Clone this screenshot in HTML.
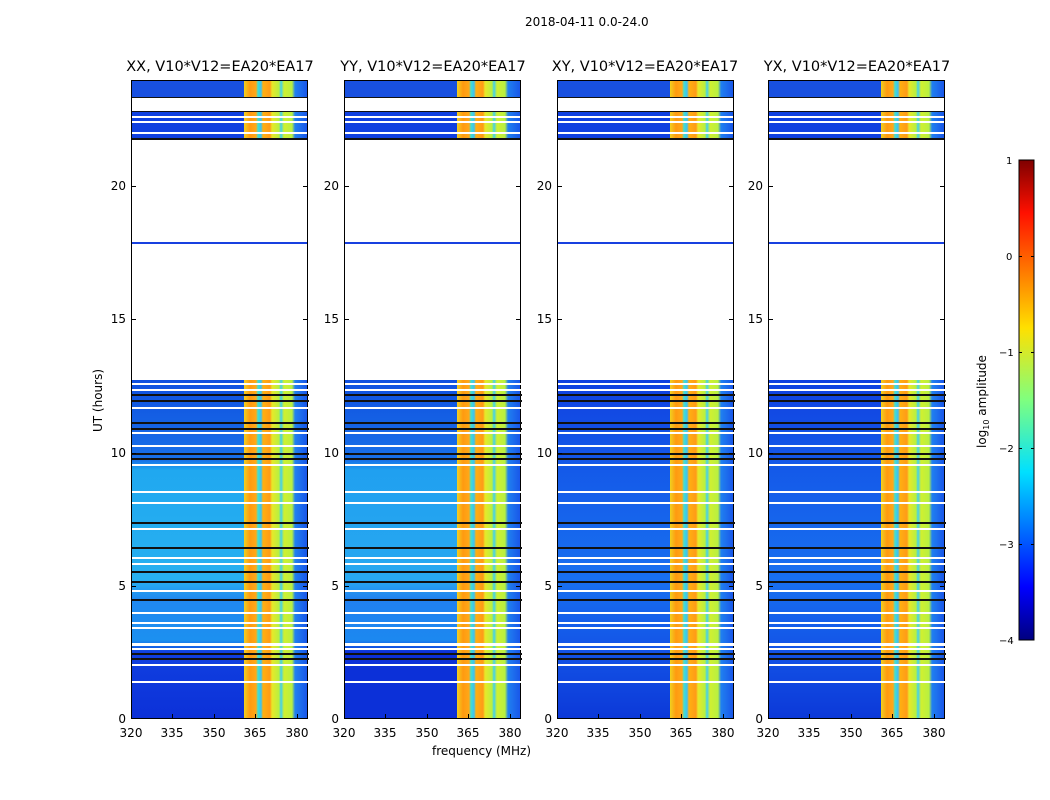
<!DOCTYPE html><html><head><style>
body{margin:0;width:1050px;height:800px;background:#fff;font-family:"DejaVu Sans",sans-serif;position:relative;overflow:hidden}
.t{position:absolute;font-size:12px;color:#000;white-space:nowrap}
.p{position:absolute;top:80px;width:177px;height:639px;border:1px solid #000;box-sizing:border-box;background:#fff;overflow:hidden}
.p div{position:absolute}
.bg{left:0;width:112px}
.bd{left:112px;width:65px;background:linear-gradient(90deg,#f0d020 0,#ff9a10 6px,#ffa818 12px,#40e0d0 14px,#40c0f0 17px,#ffb010 19px,#ff9a18 26px,#e8e828 28px,#b8f040 35px,#40d0f0 37px,#d0f030 40px,#b8f040 48px,#2080f0 51px,#1850e8 65px)}
.w{left:0;width:177px;height:2px;background:#fff}
.k{left:0;width:177px;height:2px;background:#111}
.title{position:absolute;top:59px;font-size:14.5px;width:240px;text-align:center;white-space:nowrap}
</style></head><body>
<div class="t" style="left:525px;top:15px;font-size:12px">2018-04-11 0.0-24.0</div>

<div class="title" style="left:100px">XX, V10*V12=EA20*EA17</div>
<div class="title" style="left:313px">YY, V10*V12=EA20*EA17</div>
<div class="title" style="left:525px">XY, V10*V12=EA20*EA17</div>
<div class="title" style="left:737px">YX, V10*V12=EA20*EA17</div>

<div class="p" style="left:131px">
<div class="bg" style="top:0;height:16px;background:#1850e0"></div><div class="bd" style="top:0;height:16px"></div>
<div class="bg" style="top:31px;height:27px;background:#1040e0"></div><div class="bd" style="top:31px;height:27px"></div>
<div class="k" style="top:16px;height:1px"></div><div class="k" style="top:30px;height:1px"></div><div class="k" style="top:57px"></div>
<div class="w" style="top:35px"></div><div class="w" style="top:40px"></div><div class="w" style="top:51px"></div>
<div class="k" style="top:161px;height:2px;background:#1840e0"></div>
<div class="bg" style="top:299px;height:340px;background:linear-gradient(180deg,#1050e0 0,#1870e8 80px,#20a8f0 90px,#28b0f0 200px,#2088f0 220px,#1c90f0 260px,#1040e0 272px,#0c30d8 340px)"></div>
<div class="bd" style="top:299px;height:340px"></div>
</div>

<div class="p" style="left:344px">
<div class="bg" style="top:0;height:16px;background:#1850e0"></div><div class="bd" style="top:0;height:16px"></div>
<div class="bg" style="top:31px;height:27px;background:#1040e0"></div><div class="bd" style="top:31px;height:27px"></div>
<div class="k" style="top:16px;height:1px"></div><div class="k" style="top:30px;height:1px"></div><div class="k" style="top:57px"></div>
<div class="w" style="top:35px"></div><div class="w" style="top:40px"></div><div class="w" style="top:51px"></div>
<div class="k" style="top:161px;height:2px;background:#1840e0"></div>
<div class="bg" style="top:299px;height:340px;background:linear-gradient(180deg,#1050e0 0,#1870e8 80px,#20a0f0 90px,#28a8f0 200px,#2080f0 220px,#1c88f0 260px,#0c30d8 272px,#0c30d8 340px)"></div>
<div class="bd" style="top:299px;height:340px"></div>
</div>

<div class="p" style="left:557px">
<div class="bg" style="top:0;height:16px;background:#1850e0"></div><div class="bd" style="top:0;height:16px"></div>
<div class="bg" style="top:31px;height:27px;background:#1040e0"></div><div class="bd" style="top:31px;height:27px"></div>
<div class="k" style="top:16px;height:1px"></div><div class="k" style="top:30px;height:1px"></div><div class="k" style="top:57px"></div>
<div class="w" style="top:35px"></div><div class="w" style="top:40px"></div><div class="w" style="top:51px"></div>
<div class="k" style="top:161px;height:2px;background:#1840e0"></div>
<div class="bg" style="top:299px;height:340px;background:linear-gradient(180deg,#1040e0 0,#1458e8 80px,#1870f0 200px,#1458e8 260px,#0c38d8 340px)"></div>
<div class="bd" style="top:299px;height:340px"></div>
</div>

<div class="p" style="left:768px">
<div class="bg" style="top:0;height:16px;background:#1850e0"></div><div class="bd" style="top:0;height:16px"></div>
<div class="bg" style="top:31px;height:27px;background:#1040e0"></div><div class="bd" style="top:31px;height:27px"></div>
<div class="k" style="top:16px;height:1px"></div><div class="k" style="top:30px;height:1px"></div><div class="k" style="top:57px"></div>
<div class="w" style="top:35px"></div><div class="w" style="top:40px"></div><div class="w" style="top:51px"></div>
<div class="k" style="top:161px;height:2px;background:#1840e0"></div>
<div class="bg" style="top:299px;height:340px;background:linear-gradient(180deg,#1040e0 0,#1458e8 80px,#1870f0 200px,#1458e8 260px,#0c38d8 340px)"></div>
<div class="bd" style="top:299px;height:340px"></div>
</div>

<svg width="1050" height="800" style="position:absolute;left:0;top:0" font-family="DejaVu Sans" font-size="12">
<defs>
<g id="hl">
<rect x="0" y="383" width="177" height="2" fill="#fff"/>
<rect x="0" y="389" width="177" height="2" fill="#fff"/>
<rect x="0" y="394" width="177" height="2" fill="#111"/>
<rect x="0" y="400" width="177" height="2" fill="#111"/>
<rect x="0" y="407" width="177" height="2" fill="#fff"/>
<rect x="0" y="422" width="177" height="2" fill="#111"/>
<rect x="0" y="428" width="177" height="2" fill="#111"/>
<rect x="0" y="432" width="177" height="2" fill="#fff"/>
<rect x="0" y="445" width="177" height="2" fill="#fff"/>
<rect x="0" y="453" width="177" height="2" fill="#111"/>
<rect x="0" y="458" width="177" height="2" fill="#111"/>
<rect x="0" y="464" width="177" height="2" fill="#fff"/>
<rect x="0" y="491" width="177" height="2" fill="#fff"/>
<rect x="0" y="502" width="177" height="2" fill="#fff"/>
<rect x="0" y="522" width="177" height="2" fill="#111"/>
<rect x="0" y="528" width="177" height="2" fill="#fff"/>
<rect x="0" y="547" width="177" height="2" fill="#111"/>
<rect x="0" y="557" width="177" height="2" fill="#fff"/>
<rect x="0" y="563" width="177" height="2" fill="#fff"/>
<rect x="0" y="571" width="177" height="2" fill="#111"/>
<rect x="0" y="581" width="177" height="2" fill="#111"/>
<rect x="0" y="590" width="177" height="2" fill="#fff"/>
<rect x="0" y="599" width="177" height="2" fill="#111"/>
<rect x="0" y="612" width="177" height="2" fill="#fff"/>
<rect x="0" y="622" width="177" height="2" fill="#fff"/>
<rect x="0" y="627" width="177" height="2" fill="#fff"/>
<rect x="0" y="643" width="177" height="3" fill="#fff"/>
<rect x="0" y="648" width="177" height="2" fill="#fff"/>
<rect x="0" y="653" width="177" height="2" fill="#111"/>
<rect x="0" y="658" width="177" height="2" fill="#111"/>
<rect x="0" y="664" width="177" height="2" fill="#fff"/>
<rect x="0" y="681" width="177" height="2" fill="#fff"/>
</g>
<g id="xt" fill="#000"><rect x="172" y="714" width="1" height="5"/><rect x="214" y="714" width="1" height="5"/><rect x="255" y="714" width="1" height="5"/><rect x="297" y="714" width="1" height="5"/>
<rect x="131" y="453" width="5" height="1"/><rect x="131" y="586" width="5" height="1"/><rect x="131" y="319" width="5" height="1"/><rect x="131" y="186" width="5" height="1"/>
<rect x="303" y="453" width="5" height="1"/><rect x="303" y="586" width="5" height="1"/><rect x="303" y="319" width="5" height="1"/><rect x="303" y="186" width="5" height="1"/></g>
<g id="xl" font-family="DejaVu Sans" font-size="12" fill="#000"><text x="131" y="737" text-anchor="middle">320</text><text x="172" y="737" text-anchor="middle">335</text><text x="214" y="737" text-anchor="middle">350</text><text x="255" y="737" text-anchor="middle">365</text><text x="297" y="737" text-anchor="middle">380</text>
<text x="126" y="723" text-anchor="end">0</text><text x="126" y="590" text-anchor="end">5</text><text x="126" y="457" text-anchor="end">10</text><text x="126" y="323" text-anchor="end">15</text><text x="126" y="190" text-anchor="end">20</text></g>
<linearGradient id="jet" x1="0" y1="1" x2="0" y2="0">
<stop offset="0" stop-color="#00007f"/><stop offset=".11" stop-color="#0000ff"/><stop offset=".35" stop-color="#00e0ff"/><stop offset=".5" stop-color="#7fff7f"/><stop offset=".65" stop-color="#ffe000"/><stop offset=".89" stop-color="#ff1000"/><stop offset="1" stop-color="#7f0000"/>
</linearGradient>
</defs>
<use href="#hl" x="132"/><use href="#hl" x="345"/><use href="#hl" x="558"/><use href="#hl" x="769"/>
<use href="#xt"/><use href="#xt" x="213"/><use href="#xt" x="426"/><use href="#xt" x="637"/>
<use href="#xl"/><use href="#xl" x="213"/><use href="#xl" x="426"/><use href="#xl" x="637"/>
<rect x="1019" y="160" width="15" height="480" fill="url(#jet)" stroke="#000"/>
<g fill="#000"><rect x="1019" y="256" width="3" height="1"/><rect x="1019" y="352" width="3" height="1"/><rect x="1019" y="448" width="3" height="1"/><rect x="1019" y="544" width="3" height="1"/><rect x="1031" y="256" width="3" height="1"/><rect x="1031" y="352" width="3" height="1"/><rect x="1031" y="448" width="3" height="1"/><rect x="1031" y="544" width="3" height="1"/></g>
<g font-size="10" fill="#000">
<text x="1006" y="164">1</text><text x="1006" y="260">0</text><text x="999" y="356">−1</text><text x="999" y="452">−2</text><text x="999" y="548">−3</text><text x="999" y="644">−4</text>
</g>
<text x="432" y="755" font-size="12">frequency (MHz)</text>
<text transform="translate(102,432) rotate(-90)" font-size="12">UT (hours)</text>
<text transform="translate(986,448) rotate(-90)" font-size="12">log<tspan font-size="8" dy="3">10</tspan><tspan dy="-3"> amplitude</tspan></text>
</svg>
</body></html>
